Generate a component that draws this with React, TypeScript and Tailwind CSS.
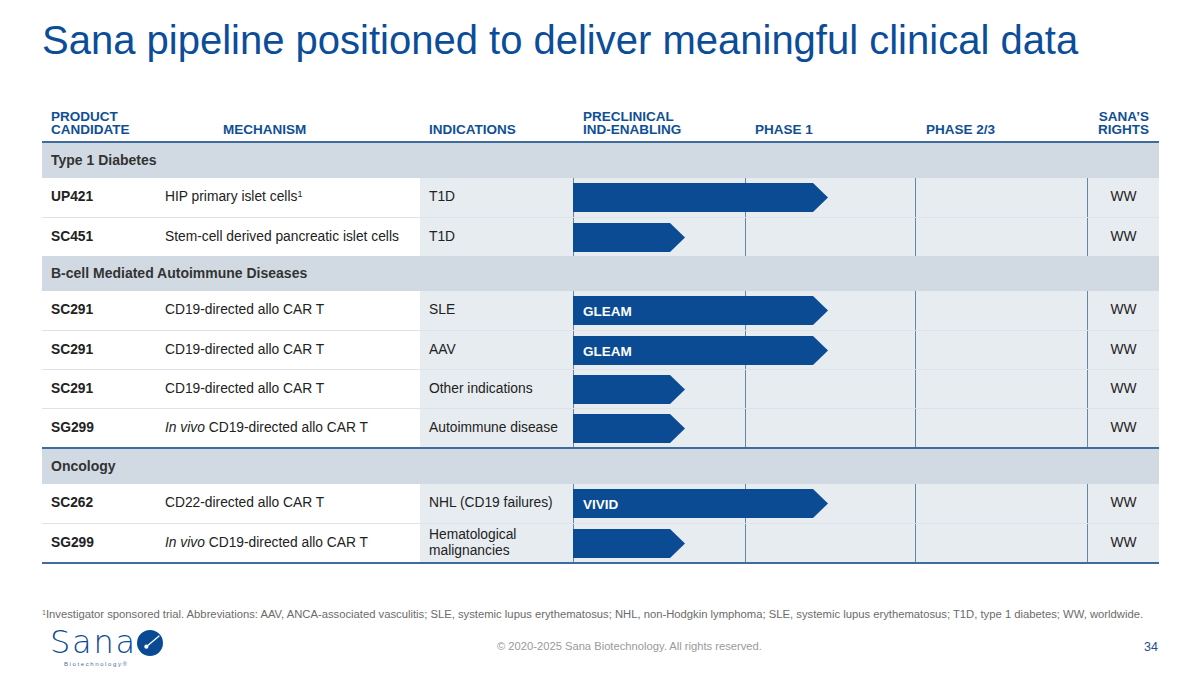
import React from "react";

type Row =
  | { kind: "section"; label: string; blueTop?: boolean }
  | {
      kind: "data";
      code: string;
      mech: React.ReactNode;
      ind: React.ReactNode;
      bar: "long" | "short";
      label?: string;
      first?: boolean;
    };

const rows: Row[] = [
  { kind: "section", label: "Type 1 Diabetes" },
  {
    kind: "data",
    code: "UP421",
    mech: (
      <>
        HIP primary islet cells<sup className="text-[9px]">1</sup>
      </>
    ),
    ind: "T1D",
    bar: "long",
    first: true,
  },
  { kind: "data", code: "SC451", mech: "Stem-cell derived pancreatic islet cells", ind: "T1D", bar: "short" },
  { kind: "section", label: "B-cell Mediated Autoimmune Diseases" },
  { kind: "data", code: "SC291", mech: "CD19-directed allo CAR T", ind: "SLE", bar: "long", label: "GLEAM", first: true },
  { kind: "data", code: "SC291", mech: "CD19-directed allo CAR T", ind: "AAV", bar: "long", label: "GLEAM" },
  { kind: "data", code: "SC291", mech: "CD19-directed allo CAR T", ind: "Other indications", bar: "short" },
  {
    kind: "data",
    code: "SG299",
    mech: (
      <>
        <i>In vivo</i> CD19-directed allo CAR T
      </>
    ),
    ind: "Autoimmune disease",
    bar: "short",
  },
  { kind: "section", label: "Oncology", blueTop: true },
  { kind: "data", code: "SC262", mech: "CD22-directed allo CAR T", ind: "NHL (CD19 failures)", bar: "long", label: "VIVID", first: true },
  {
    kind: "data",
    code: "SG299",
    mech: (
      <>
        <i>In vivo</i> CD19-directed allo CAR T
      </>
    ),
    ind: (
      <span className="leading-[16px] block">
        Hematological
        <br />
        malignancies
      </span>
    ),
    bar: "short",
  },
];

const cols = "grid grid-cols-[113px_265px_153px_172px_170px_172px_72px]";

function DataRow({ r }: { r: Extract<Row, { kind: "data" }> }) {
  return (
    <div
      className={`${cols} h-[39px] ${r.first ? "" : "border-t border-[#dde3e8]"} text-[13.8px] text-[#222]`}
    >
      <div className="col-start-1 row-start-1 flex items-center pl-[9px] font-bold">{r.code}</div>
      <div className="col-start-2 row-start-1 flex items-center pl-[10px]">
        <span>{r.mech}</span>
      </div>
      <div className="col-start-3 row-start-1 flex items-center pl-[9px] bg-[#e7ecf0]">{r.ind}</div>
      <div className="col-start-4 row-start-1 bg-[#e7ecf0] border-l border-[#6585ad]" />
      <div className="col-start-5 row-start-1 bg-[#e7ecf0] border-l border-[#6585ad]" />
      <div className="col-start-6 row-start-1 bg-[#e7ecf0] border-l border-[#6585ad]" />
      <div className="col-start-7 row-start-1 bg-[#e7ecf0] border-l border-[#6585ad] flex items-center justify-center">
        WW
      </div>
      <div
        className={`col-start-4 col-span-3 row-start-1 self-start mt-[5px] h-[29px] ${
          r.bar === "long" ? "w-[255px]" : "w-[112px]"
        } bg-[#0a4b93] [clip-path:polygon(0_0,calc(100%_-_15px)_0,100%_50%,calc(100%_-_15px)_100%,0_100%)] flex items-center pl-[10px] pt-[3px] text-white font-bold text-[13.5px]`}
      >
        {r.label}
      </div>
    </div>
  );
}

function SectionRow({ r }: { r: Extract<Row, { kind: "section" }> }) {
  return (
    <div
      className={`bg-[#d1dae2] flex items-center pl-[9px] text-[14px] font-bold text-[#333] ${
        r.blueTop ? "border-t-2 border-[#3f6c9d] h-[37px]" : "h-[35px]"
      }`}
    >
      {r.label}
    </div>
  );
}

function Logo() {
  return (
    <div className="flex flex-col items-start pl-[8px]">
      <div className="flex items-center">
        <span className="font-['DejaVu_Sans',sans-serif] font-extralight text-[32px] leading-[37px] text-[#0a4a94] tracking-[1.8px]">
          Sana
        </span>
        <svg width="26" height="26" viewBox="0 0 100 100" className="ml-[0px] mt-[1px]">
          <circle cx="50" cy="50" r="50" fill="#0a4a94" />
          <line x1="37" y1="63" x2="86" y2="22" stroke="#fff" strokeWidth="5" />
          <circle cx="36" cy="64" r="8" fill="#fff" />
        </svg>
      </div>
      <div className="ml-[14px] text-[6px] leading-[7px] tracking-[1.6px] text-[#4a6f9c] font-['Liberation_Sans',sans-serif]">
        Biotechnology®
      </div>
    </div>
  );
}

export default function App() {
  return (
    <div className="w-[1200px] h-[675px] bg-white overflow-hidden font-['Liberation_Sans',Arial,sans-serif] relative">
      <div className="px-[42px] pt-[20px]">
        <h1 className="text-[40px] leading-[40px] text-[#0b4d98] font-normal">
          Sana pipeline positioned to deliver meaningful clinical data
        </h1>

        <div className="w-[1117px] mt-[50px]">
          {/* header */}
          <div
            className={`${cols} items-end text-[13.5px] leading-[13px] font-bold text-[#104f94] pb-[5px] border-b-2 border-[#3f6c9d]`}
          >
            <div className="pl-[9px]">
              PRODUCT
              <br />
              CANDIDATE
            </div>
            <div className="pl-[68px]">MECHANISM</div>
            <div className="pl-[9px]">INDICATIONS</div>
            <div className="pl-[10px]">
              PRECLINICAL
              <br />
              IND-ENABLING
            </div>
            <div className="pl-[10px]">PHASE 1</div>
            <div className="pl-[11px]">PHASE 2/3</div>
            <div className="text-right pr-[10px]">
              SANA’S
              <br />
              RIGHTS
            </div>
          </div>

          {rows.map((r, i) =>
            r.kind === "section" ? <SectionRow key={i} r={r} /> : <DataRow key={i} r={r} />
          )}
          <div className="h-[2px] bg-[#3f6c9d]" />
        </div>

        <p className="mt-[43px] text-[11.25px] leading-[14px] text-[#6b6b6b] whitespace-nowrap">
          <sup className="text-[7px]">1</sup>Investigator sponsored trial. Abbreviations: AAV, ANCA-associated
          vasculitis; SLE, systemic lupus erythematosus; NHL, non-Hodgkin lymphoma; SLE, systemic lupus
          erythematosus; T1D, type 1 diabetes; WW, worldwide.
        </p>

        <div className="flex items-start mt-[3px] w-[1117px]">
          <div className="w-[455px]">
            <Logo />
          </div>
          <div className="mt-[14px] text-[11.2px] text-[#9a9a9a]">
            © 2020-2025 Sana Biotechnology. All rights reserved.
          </div>
          <div className="flex-1" />
          <div className="mt-[14px] text-[12.5px] text-[#1a4e90] pr-[1px]">34</div>
        </div>
      </div>
    </div>
  );
}
